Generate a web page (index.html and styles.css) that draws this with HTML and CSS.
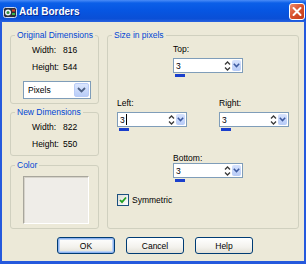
FILE: index.html
```html
<html>
  <head>
    <link rel="stylesheet" href="styles.css">
  </head>
  <body>
    <div class="window">
      <div class="titlebar">
        <svg class="appicon" width="14" height="12" viewBox="0 0 14 12">
          <rect x="0.5" y="1.5" width="13" height="10" rx="2" fill="#2b2f3a" stroke="#cfd8f0"/>
          <circle cx="5" cy="6.5" r="3" fill="#e8f0ff"/>
          <circle cx="5" cy="6.5" r="1.5" fill="#2f8f3a"/>
          <rect x="9" y="3.5" width="3" height="2" fill="#e0402a"/>
          <rect x="9" y="7" width="3" height="2" fill="#39b54a"/>
        </svg>
        <span class="title">Add Borders</span>
        <div class="close">
          <svg width="14" height="15" viewBox="0 0 14 15">
            <path d="M3.5 4 L10.5 11 M10.5 4 L3.5 11" stroke="#fff" stroke-width="2" stroke-linecap="round"/>
          </svg>
        </div>
      </div>
      <div class="client">
        <div class="panes">
          <div class="leftcol">
            <fieldset class="grp orig">
              <legend>Original Dimensions</legend>
              <div class="dims">
                <span>Width:</span><span>816</span>
                <span>Height:</span><span>544</span>
              </div>
              <div class="select">
                <span class="selval">Pixels</span>
                <span class="dropbtn">
                  <svg width="9" height="6" viewBox="0 0 9 6"><path d="M1 1 L4.5 4.5 L8 1" fill="none" stroke="#4d6185" stroke-width="1.8"/></svg>
                </span>
              </div>
            </fieldset>
            <fieldset class="grp newdim">
              <legend>New Dimensions</legend>
              <div class="dims">
                <span>Width:</span><span>822</span>
                <span>Height:</span><span>550</span>
              </div>
            </fieldset>
            <fieldset class="grp color">
              <legend>Color</legend>
              <div class="swatch"></div>
            </fieldset>
          </div>
          <fieldset class="grp size">
            <legend>Size in pixels</legend>
            <div class="edge top">
              <div class="lbl">Top:</div>
              <div class="spin">
                <div class="field">
                  <span class="val">3</span>
                  <svg class="arrows" width="7" height="12" viewBox="0 0 7 12"><path d="M1 4.5 L3.5 2 L6 4.5 M1 7.5 L3.5 10 L6 7.5" fill="none" stroke="#3a3a3a" stroke-width="1.3"/></svg>
                  <span class="drop"><svg width="7" height="5" viewBox="0 0 7 5"><path d="M0.8 0.8 L3.5 3.6 L6.2 0.8" fill="none" stroke="#3d5aa0" stroke-width="1.5"/></svg></span>
                </div>
                <div class="bar"></div>
              </div>
            </div>
            <div class="pair">
              <div class="edge">
                <div class="lbl">Left:</div>
                <div class="spin">
                  <div class="field">
                    <span class="val">3<span class="caret"></span></span>
                    <svg class="arrows" width="7" height="12" viewBox="0 0 7 12"><path d="M1 4.5 L3.5 2 L6 4.5 M1 7.5 L3.5 10 L6 7.5" fill="none" stroke="#3a3a3a" stroke-width="1.3"/></svg>
                    <span class="drop"><svg width="7" height="5" viewBox="0 0 7 5"><path d="M0.8 0.8 L3.5 3.6 L6.2 0.8" fill="none" stroke="#3d5aa0" stroke-width="1.5"/></svg></span>
                  </div>
                  <div class="bar"></div>
                </div>
              </div>
              <div class="edge">
                <div class="lbl">Right:</div>
                <div class="spin">
                  <div class="field">
                    <span class="val">3</span>
                    <svg class="arrows" width="7" height="12" viewBox="0 0 7 12"><path d="M1 4.5 L3.5 2 L6 4.5 M1 7.5 L3.5 10 L6 7.5" fill="none" stroke="#3a3a3a" stroke-width="1.3"/></svg>
                    <span class="drop"><svg width="7" height="5" viewBox="0 0 7 5"><path d="M0.8 0.8 L3.5 3.6 L6.2 0.8" fill="none" stroke="#3d5aa0" stroke-width="1.5"/></svg></span>
                  </div>
                  <div class="bar"></div>
                </div>
              </div>
            </div>
            <div class="edge bottom">
              <div class="lbl">Bottom:</div>
              <div class="spin">
                <div class="field">
                  <span class="val">3</span>
                  <svg class="arrows" width="7" height="12" viewBox="0 0 7 12"><path d="M1 4.5 L3.5 2 L6 4.5 M1 7.5 L3.5 10 L6 7.5" fill="none" stroke="#3a3a3a" stroke-width="1.3"/></svg>
                  <span class="drop"><svg width="7" height="5" viewBox="0 0 7 5"><path d="M0.8 0.8 L3.5 3.6 L6.2 0.8" fill="none" stroke="#3d5aa0" stroke-width="1.5"/></svg></span>
                </div>
                <div class="bar"></div>
              </div>
            </div>
            <div class="check">
              <span class="box">
                <svg width="8" height="8" viewBox="0 0 8 8"><path d="M1 4 L3 6.2 L7 1.5" fill="none" stroke="#21a121" stroke-width="1.8"/></svg>
              </span>
              <span>Symmetric</span>
            </div>
          </fieldset>
        </div>
        <div class="buttons">
          <div class="btn default">OK</div>
          <div class="btn">Cancel</div>
          <div class="btn">Help</div>
        </div>
      </div>
    </div>
  </body>
</html>
```

FILE: styles.css
```css
* { box-sizing: border-box; }

body {
  margin: 0;
  font-family: "Liberation Sans", Arial, sans-serif;
  font-size: 8.5px;
  color: #000;
  background: #ece9d8;
}

.window {
  width: 306px;
  height: 264px;
  display: flex;
  flex-direction: column;
}

.titlebar {
  height: 22px;
  flex: none;
  display: flex;
  align-items: center;
  background: linear-gradient(#4a8cf7 0, #0b5fe8 3px, #0656e2 45%, #0a4fd6 85%, #2a63e0 100%);
}
.appicon { margin-left: 3px; margin-top: 1px; }
.title {
  margin-left: 2px;
  color: #fff;
  font-weight: bold;
  font-size: 10px;
  text-shadow: 1px 1px 0 #0a2a90;
}
.close {
  margin-left: auto;
  margin-right: 1px;
  width: 16px;
  height: 17px;
  border: 1px solid #fff;
  border-radius: 3px;
  background: linear-gradient(135deg, #ee8a6c, #d8502c 50%, #c23a18);
  display: flex;
  align-items: center;
  justify-content: center;
}

.client {
  flex: 1;
  background: #ece9d8;
  border: solid #2559dd;
  border-width: 0 2px 3px 2px;
  padding: 8px 5px 0 8px;
}

.panes { display: flex; gap: 8px; }
.leftcol { width: 89px; display: flex; flex-direction: column; }

.grp {
  margin: 0;
  padding: 0;
  min-width: 0;
  border: 1px solid #d0d0bf;
  border-radius: 3px;
}
.grp legend {
  margin-left: 4px;
  padding: 0 2px;
  color: #0046d5;
  line-height: 10px;
}
.orig { height: 74px; }
.newdim { height: 49px; margin-top: 3px; }
.color { height: 69px; margin-top: 4px; }
.size { width: 192px; height: 199px; }

.dims {
  display: grid;
  grid-template-columns: 31px auto;
  row-gap: 5px;
  line-height: 12px;
  margin: 4px 0 0 21px;
}

.select {
  margin: 8px 0 0 12px;
  width: 68px;
  height: 18px;
  border: 1px solid #7f9db9;
  background: #fff;
  display: flex;
  align-items: center;
  padding: 1px;
}
.selval { flex: 1; padding-left: 3px; }
.dropbtn {
  width: 15px;
  height: 14px;
  border: 1px solid #b9ccf7;
  border-radius: 2px;
  background: linear-gradient(#dbe6fe, #b9cdf8);
  display: flex;
  align-items: center;
  justify-content: center;
}

.swatch {
  margin: 6px 0 0 12px;
  width: 66px;
  height: 48px;
  background: #efede8;
  border: 1px solid #a8a69c;
  border-right-color: #fff;
  border-bottom-color: #fff;
  box-shadow: inset 1px 1px 0 #d6d3ca;
}

.edge .lbl { line-height: 10px; margin-bottom: 4px; }
.edge.top { margin: 4px 0 0 65px; }
.pair { display: flex; gap: 32px; margin: 21px 0 0 9px; }
.edge.bottom { margin: 22px 0 0 65px; }
.edge.bottom .lbl { margin-bottom: 0; }

.spin { width: 70px; }
.field {
  height: 15px;
  border: 1px solid #7f9db9;
  background: #fff;
  display: flex;
  align-items: center;
  padding: 0 1px 0 2px;
}
.val { flex: 1; display: flex; align-items: center; }
.caret { width: 1px; height: 11px; background: #000; margin-left: 1px; }
.arrows { margin-right: 1px; }
.drop {
  width: 9px;
  height: 11px;
  border-radius: 2px;
  background: linear-gradient(#d6e2fd, #b7cbf7);
  display: flex;
  align-items: center;
  justify-content: center;
}
.bar {
  margin: 1px 0 0 2px;
  width: 10px;
  height: 3px;
  background: #1a3fcc;
}

.check {
  display: flex;
  align-items: center;
  gap: 3px;
  margin: 12px 0 0 9px;
}
.check .box {
  width: 12px;
  height: 12px;
  border: 1px solid #1c5180;
  background: linear-gradient(135deg, #dcdcd5, #fff);
  display: flex;
  align-items: center;
  justify-content: center;
}

.buttons {
  display: flex;
  gap: 11px;
  margin: 8px 0 0 47px;
}
.btn {
  width: 58px;
  height: 17px;
  border: 1px solid #003c74;
  border-radius: 3px;
  background: linear-gradient(#ffffff, #f3f2ed 60%, #e3e0d6);
  display: flex;
  align-items: center;
  justify-content: center;
}
.btn.default { box-shadow: inset 0 0 0 1px #8db2f0, inset 0 0 0 2px #bcd4f6; }
```
